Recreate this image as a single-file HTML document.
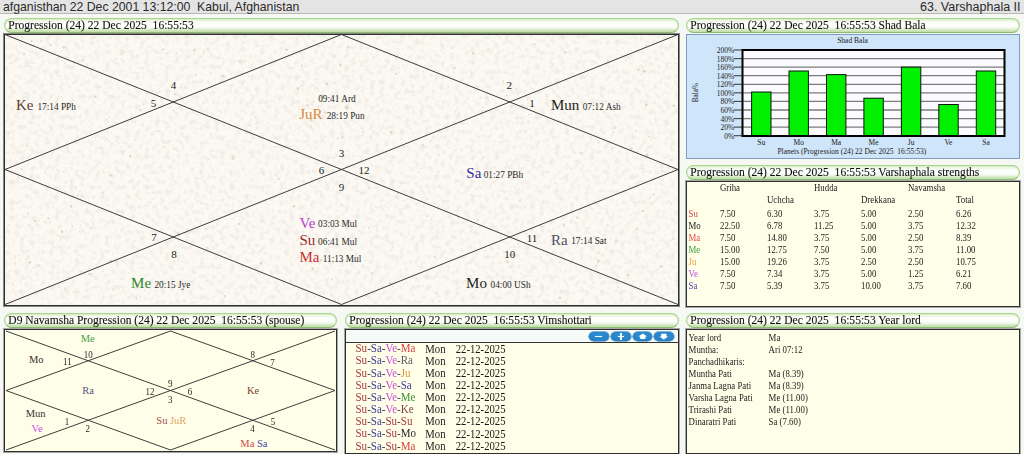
<!DOCTYPE html>
<html><head><meta charset="utf-8">
<style>
*{margin:0;padding:0;box-sizing:border-box}
html,body{width:1024px;height:454px;overflow:hidden;background:#f6f8f3;position:relative;font-family:"Liberation Serif",serif;color:#222}
.a{position:absolute;white-space:pre;line-height:1}
#hdr{position:absolute;left:0;top:0;width:1024px;height:14px;background:#e4e4e4;border-bottom:1px solid #b8b8b8}
.tb{position:absolute;height:15px;border:1px solid #a8d68c;border-bottom-color:#8cba72;border-radius:8px;background:linear-gradient(#e2f1d4 0,#fafdf7 28%,#fff 50%,#f2f9ec 70%,#d2e8bf 86%,#b2d49a 100%);box-shadow:inset 0 0 1px 0.5px #cfe9b8}
.tb span{position:absolute;left:3.3px;top:0px;font-size:11.55px;color:#111;white-space:pre;line-height:13px;-webkit-text-stroke:0.1px #111;transform:scaleY(1.12);transform-origin:0 10px}
.bx{position:absolute;border:1px solid #2e2e2e;box-shadow:0 0 0 1px #a8a8a8}
.btn{position:absolute;top:331.8px;width:19.5px;height:9.2px;border-radius:4.6px;background:radial-gradient(ellipse at 50% 40%,#3092d8,#2179c0);box-shadow:0 0 0 0.5px #1b6aa8}
.btn i{position:absolute;background:#fff;display:block}
.yel{background:#fffee8}
svg{position:absolute;left:0;top:0}
</style></head><body>
<div id="hdr"></div>
<div class="tb" style="left:4px;top:18px;width:675px"><span>Progression (24) 22 Dec 2025  16:55:53</span></div>
<div class="tb" style="left:686px;top:18px;width:334px"><span>Progression (24) 22 Dec 2025  16:55:53 Shad Bala</span></div>
<div class="tb" style="left:686px;top:165px;width:334px"><span>Progression (24) 22 Dec 2025  16:55:53 Varshaphala strengths</span></div>
<div class="tb" style="left:4px;top:313px;width:333px"><span>D9 Navamsha Progression (24) 22 Dec 2025  16:55:53 (spouse)</span></div>
<div class="tb" style="left:345px;top:313px;width:334px"><span>Progression (24) 22 Dec 2025  16:55:53 Vimshottari</span></div>
<div class="tb" style="left:686px;top:313px;width:334px"><span>Progression (24) 22 Dec 2025  16:55:53 Year lord</span></div>

<div class="bx" style="left:4px;top:34px;width:675px;height:271.5px;background:#fcf9f3;box-shadow:0 0 0 1px #888"></div>
<div class="bx" style="left:686px;top:33.5px;width:334px;height:125px;background:#cfe5f9;border:1px solid #7f9dc2;box-shadow:none"></div>
<div class="bx yel" style="left:686px;top:180.5px;width:334px;height:126px"></div>
<div class="bx yel" style="left:4px;top:329.3px;width:333px;height:122.5px"></div>
<div class="bx yel" style="left:345px;top:329.3px;width:334px;height:125px"></div>
<div style="position:absolute;left:346px;top:330px;width:332px;height:12px;background:#f6fbf8"></div>
<div style="position:absolute;left:346px;top:342px;width:332px;height:1px;background:#333"></div>
<div class="btn" style="left:589px"><i style="left:6px;top:3.8px;width:7px;height:1.6px"></i></div>
<div class="btn" style="left:611px"><i style="left:6.5px;top:3.8px;width:6.5px;height:1.6px"></i><i style="left:9px;top:1.3px;width:1.6px;height:6.5px"></i></div>
<div class="btn" style="left:632.8px"><svg width="19.5" height="9.2" style="position:absolute;left:0;top:0"><polygon points="5.5,4.6 9.8,1.4 14.1,4.6 12.4,4.6 12.4,7 7.2,7 7.2,4.6" fill="#fff"/></svg></div>
<div class="btn" style="left:654.3px"><svg width="19.5" height="9.2" style="position:absolute;left:0;top:0"><polygon points="7.2,1.8 12.4,1.8 12.4,4.4 14.3,4.4 9.8,7.6 5.3,4.4 7.2,4.4" fill="#fff"/></svg></div>
<div class="bx yel" style="left:686px;top:329.3px;width:334px;height:125px"></div>

<svg width="1024" height="454">
<filter id="pn" x="0" y="0" width="100%" height="100%"><feTurbulence type="fractalNoise" baseFrequency="0.2" numOctaves="2" seed="3"/><feColorMatrix values="0 0 0 0 0.45  0 0 0 0 0.38  0 0 0 0 0.32  0 0 0 -2.2 1.2"/></filter><rect x="5" y="35" width="673" height="270" filter="url(#pn)" opacity="0.22"/>
<g opacity="0.75"><circle cx="223.6" cy="76.3" r="1.3" fill="#d9d0c6"/><circle cx="55.5" cy="179.1" r="0.7" fill="#cfc6bc"/><circle cx="45.8" cy="171.5" r="0.5" fill="#d9d0c6"/><circle cx="297.1" cy="54.7" r="0.5" fill="#cfc6bc"/><circle cx="291.0" cy="256.8" r="0.5" fill="#e2d6d0"/><circle cx="428.9" cy="191.7" r="0.5" fill="#cfc6bc"/><circle cx="398.7" cy="49.2" r="0.6" fill="#d9d0c6"/><circle cx="379.4" cy="71.6" r="0.8" fill="#e2d6d0"/><circle cx="368.7" cy="188.4" r="1.0" fill="#e2d6d0"/><circle cx="75.9" cy="188.5" r="0.6" fill="#d4cdc4"/><circle cx="72.2" cy="226.1" r="1.0" fill="#d9d0c6"/><circle cx="421.1" cy="168.5" r="1.0" fill="#e6dcd2"/><circle cx="527.0" cy="160.3" r="0.8" fill="#d4cdc4"/><circle cx="207.5" cy="248.1" r="1.3" fill="#e2d6d0"/><circle cx="61.8" cy="116.2" r="0.8" fill="#d4cdc4"/><circle cx="495.0" cy="112.9" r="0.5" fill="#d9d0c6"/><circle cx="349.5" cy="80.0" r="0.7" fill="#e2d6d0"/><circle cx="631.4" cy="148.6" r="1.3" fill="#d9d0c6"/><circle cx="518.5" cy="189.0" r="0.7" fill="#d4cdc4"/><circle cx="472.2" cy="194.7" r="1.0" fill="#e6dcd2"/><circle cx="53.0" cy="61.0" r="0.7" fill="#e6dcd2"/><circle cx="473.3" cy="53.4" r="1.3" fill="#d4cdc4"/><circle cx="439.9" cy="301.2" r="0.8" fill="#d4cdc4"/><circle cx="486.4" cy="272.8" r="0.7" fill="#d9d0c6"/><circle cx="636.3" cy="130.9" r="1.0" fill="#d9d0c6"/><circle cx="337.3" cy="94.3" r="0.7" fill="#e2d6d0"/><circle cx="501.0" cy="142.2" r="0.8" fill="#d9d0c6"/><circle cx="118.3" cy="143.2" r="0.7" fill="#e2d6d0"/><circle cx="555.1" cy="266.7" r="0.7" fill="#e6dcd2"/><circle cx="666.9" cy="218.3" r="0.8" fill="#e2d6d0"/><circle cx="108.0" cy="83.1" r="0.6" fill="#e2d6d0"/><circle cx="15.1" cy="257.9" r="0.6" fill="#d4cdc4"/><circle cx="195.6" cy="74.9" r="1.0" fill="#d4cdc4"/><circle cx="415.0" cy="121.1" r="0.6" fill="#cfc6bc"/><circle cx="642.7" cy="210.9" r="1.3" fill="#d9d0c6"/><circle cx="312.5" cy="268.6" r="1.3" fill="#cfc6bc"/><circle cx="269.5" cy="142.5" r="0.5" fill="#e6dcd2"/><circle cx="431.3" cy="52.6" r="0.5" fill="#e2d6d0"/><circle cx="301.8" cy="65.4" r="1.0" fill="#d9d0c6"/><circle cx="75.5" cy="187.3" r="1.0" fill="#d9d0c6"/><circle cx="641.8" cy="199.9" r="0.5" fill="#e2d6d0"/><circle cx="417.8" cy="75.7" r="0.7" fill="#d4cdc4"/><circle cx="409.9" cy="162.6" r="0.5" fill="#e6dcd2"/><circle cx="671.4" cy="160.4" r="0.8" fill="#d4cdc4"/><circle cx="64.5" cy="63.3" r="0.7" fill="#d4cdc4"/><circle cx="327.2" cy="220.8" r="1.0" fill="#d9d0c6"/><circle cx="144.3" cy="290.2" r="0.7" fill="#e2d6d0"/><circle cx="468.7" cy="280.1" r="1.0" fill="#d4cdc4"/><circle cx="661.6" cy="266.5" r="1.3" fill="#d4cdc4"/><circle cx="353.8" cy="278.5" r="0.7" fill="#e2d6d0"/><circle cx="363.3" cy="244.0" r="0.7" fill="#e2d6d0"/><circle cx="417.2" cy="246.5" r="0.6" fill="#e2d6d0"/><circle cx="554.5" cy="233.5" r="0.6" fill="#e2d6d0"/><circle cx="353.3" cy="130.9" r="0.5" fill="#d9d0c6"/><circle cx="535.6" cy="162.1" r="0.6" fill="#cfc6bc"/><circle cx="646.9" cy="155.4" r="1.3" fill="#d4cdc4"/><circle cx="645.9" cy="133.4" r="0.6" fill="#d9d0c6"/><circle cx="158.8" cy="88.5" r="0.6" fill="#e6dcd2"/><circle cx="424.5" cy="276.4" r="0.5" fill="#e6dcd2"/><circle cx="615.3" cy="127.8" r="1.3" fill="#d9d0c6"/><circle cx="565.4" cy="68.0" r="0.8" fill="#e2d6d0"/><circle cx="326.8" cy="83.7" r="1.3" fill="#d4cdc4"/><circle cx="65.0" cy="288.6" r="1.3" fill="#e6dcd2"/><circle cx="316.9" cy="234.5" r="0.5" fill="#e2d6d0"/><circle cx="120.7" cy="69.9" r="0.6" fill="#cfc6bc"/><circle cx="612.3" cy="251.3" r="0.6" fill="#cfc6bc"/><circle cx="559.9" cy="297.7" r="1.3" fill="#d4cdc4"/><circle cx="111.3" cy="182.4" r="0.5" fill="#d9d0c6"/><circle cx="541.8" cy="229.9" r="0.5" fill="#cfc6bc"/><circle cx="508.4" cy="73.2" r="0.6" fill="#e2d6d0"/><circle cx="25.7" cy="92.8" r="1.0" fill="#e2d6d0"/><circle cx="517.9" cy="123.0" r="1.0" fill="#e6dcd2"/><circle cx="565.1" cy="52.3" r="1.3" fill="#d4cdc4"/><circle cx="607.6" cy="212.9" r="1.0" fill="#e6dcd2"/><circle cx="560.4" cy="270.5" r="0.6" fill="#cfc6bc"/><circle cx="108.6" cy="172.3" r="0.8" fill="#e2d6d0"/><circle cx="414.1" cy="243.2" r="0.6" fill="#e2d6d0"/><circle cx="101.7" cy="201.3" r="0.5" fill="#cfc6bc"/><circle cx="48.3" cy="218.2" r="1.0" fill="#cfc6bc"/><circle cx="329.8" cy="243.3" r="1.0" fill="#d9d0c6"/><circle cx="173.2" cy="109.9" r="0.5" fill="#cfc6bc"/><circle cx="309.5" cy="43.4" r="0.5" fill="#e6dcd2"/><circle cx="224.8" cy="295.9" r="1.0" fill="#cfc6bc"/><circle cx="140.4" cy="110.0" r="1.0" fill="#cfc6bc"/><circle cx="547.1" cy="171.6" r="0.6" fill="#cfc6bc"/><circle cx="593.4" cy="287.6" r="0.7" fill="#cfc6bc"/><circle cx="604.3" cy="90.1" r="0.8" fill="#e2d6d0"/><circle cx="285.7" cy="140.8" r="0.7" fill="#d9d0c6"/><circle cx="456.0" cy="150.4" r="0.6" fill="#d4cdc4"/><circle cx="531.5" cy="275.5" r="0.6" fill="#d4cdc4"/><circle cx="102.7" cy="271.7" r="0.8" fill="#e2d6d0"/><circle cx="506.5" cy="61.1" r="0.8" fill="#e2d6d0"/><circle cx="669.2" cy="258.3" r="0.6" fill="#e6dcd2"/><circle cx="672.0" cy="143.8" r="0.8" fill="#e2d6d0"/><circle cx="245.6" cy="60.6" r="0.7" fill="#d9d0c6"/><circle cx="233.1" cy="158.5" r="1.3" fill="#d9d0c6"/><circle cx="264.1" cy="174.2" r="0.7" fill="#cfc6bc"/><circle cx="649.8" cy="66.1" r="0.6" fill="#d9d0c6"/><circle cx="63.2" cy="108.6" r="0.6" fill="#d4cdc4"/><circle cx="512.6" cy="254.9" r="1.3" fill="#d4cdc4"/><circle cx="278.6" cy="179.3" r="1.0" fill="#cfc6bc"/><circle cx="337.9" cy="123.3" r="0.7" fill="#d9d0c6"/><circle cx="541.9" cy="85.0" r="0.5" fill="#d4cdc4"/><circle cx="634.8" cy="205.4" r="0.7" fill="#d9d0c6"/><circle cx="413.9" cy="95.4" r="0.7" fill="#d9d0c6"/><circle cx="310.6" cy="126.6" r="1.0" fill="#e6dcd2"/><circle cx="626.9" cy="107.5" r="0.6" fill="#d9d0c6"/><circle cx="359.5" cy="99.7" r="0.5" fill="#e2d6d0"/><circle cx="182.2" cy="84.4" r="0.7" fill="#d4cdc4"/><circle cx="362.3" cy="91.0" r="0.8" fill="#cfc6bc"/><circle cx="456.7" cy="108.2" r="0.5" fill="#d4cdc4"/><circle cx="31.7" cy="40.9" r="1.0" fill="#cfc6bc"/><circle cx="661.3" cy="173.3" r="0.6" fill="#e6dcd2"/><circle cx="78.1" cy="254.7" r="0.8" fill="#e6dcd2"/><circle cx="372.2" cy="273.3" r="1.0" fill="#d4cdc4"/><circle cx="467.1" cy="298.3" r="0.7" fill="#e2d6d0"/><circle cx="563.8" cy="224.7" r="1.3" fill="#e2d6d0"/><circle cx="277.7" cy="128.8" r="0.5" fill="#e2d6d0"/><circle cx="16.5" cy="203.0" r="0.7" fill="#e6dcd2"/><circle cx="116.2" cy="58.6" r="0.8" fill="#cfc6bc"/><circle cx="455.6" cy="111.3" r="0.6" fill="#d4cdc4"/><circle cx="37.3" cy="85.5" r="0.7" fill="#e6dcd2"/><circle cx="9.4" cy="133.2" r="0.7" fill="#cfc6bc"/><circle cx="223.4" cy="45.2" r="0.7" fill="#e2d6d0"/><circle cx="245.6" cy="36.3" r="0.8" fill="#d9d0c6"/><circle cx="324.5" cy="170.2" r="0.6" fill="#e2d6d0"/><circle cx="344.7" cy="37.3" r="0.7" fill="#d9d0c6"/><circle cx="103.2" cy="192.7" r="0.8" fill="#d9d0c6"/><circle cx="207.5" cy="204.1" r="0.5" fill="#cfc6bc"/><circle cx="647.7" cy="263.8" r="0.6" fill="#cfc6bc"/><circle cx="267.6" cy="123.1" r="0.8" fill="#e2d6d0"/><circle cx="197.1" cy="201.2" r="0.6" fill="#d9d0c6"/><circle cx="558.8" cy="226.9" r="1.0" fill="#e6dcd2"/><circle cx="497.9" cy="252.9" r="0.6" fill="#cfc6bc"/><circle cx="510.7" cy="187.8" r="0.5" fill="#cfc6bc"/><circle cx="540.8" cy="225.9" r="1.3" fill="#e2d6d0"/><circle cx="63.9" cy="47.2" r="1.3" fill="#d4cdc4"/><circle cx="648.9" cy="136.6" r="0.8" fill="#cfc6bc"/><circle cx="41.0" cy="41.0" r="1.0" fill="#e2d6d0"/><circle cx="334.3" cy="36.9" r="0.5" fill="#cfc6bc"/><circle cx="607.7" cy="60.5" r="1.0" fill="#d9d0c6"/><circle cx="505.9" cy="162.5" r="0.5" fill="#d4cdc4"/><circle cx="164.1" cy="238.0" r="0.6" fill="#e6dcd2"/><circle cx="337.5" cy="138.1" r="0.8" fill="#d4cdc4"/><circle cx="520.1" cy="200.7" r="1.3" fill="#e2d6d0"/><circle cx="58.8" cy="75.4" r="0.7" fill="#d4cdc4"/><circle cx="422.5" cy="71.6" r="0.8" fill="#d9d0c6"/><circle cx="332.0" cy="295.7" r="0.5" fill="#e2d6d0"/><circle cx="459.0" cy="113.7" r="1.0" fill="#d4cdc4"/><circle cx="317.9" cy="160.5" r="0.5" fill="#cfc6bc"/><circle cx="140.3" cy="297.2" r="0.8" fill="#d9d0c6"/><circle cx="200.7" cy="56.4" r="1.0" fill="#e6dcd2"/><circle cx="672.0" cy="139.3" r="0.6" fill="#d9d0c6"/><circle cx="396.0" cy="73.8" r="1.0" fill="#d4cdc4"/><circle cx="644.4" cy="71.4" r="1.3" fill="#cfc6bc"/><circle cx="194.0" cy="66.1" r="0.7" fill="#e2d6d0"/><circle cx="340.1" cy="269.9" r="0.8" fill="#d9d0c6"/><circle cx="113.4" cy="289.6" r="1.3" fill="#e6dcd2"/><circle cx="278.2" cy="230.2" r="0.8" fill="#d4cdc4"/><circle cx="258.6" cy="68.3" r="0.7" fill="#d9d0c6"/><circle cx="224.1" cy="126.3" r="0.8" fill="#d9d0c6"/><circle cx="635.8" cy="88.3" r="0.5" fill="#d4cdc4"/><circle cx="176.4" cy="53.3" r="0.8" fill="#cfc6bc"/><circle cx="58.1" cy="283.1" r="0.7" fill="#d9d0c6"/><circle cx="194.7" cy="49.8" r="1.3" fill="#d4cdc4"/><circle cx="431.8" cy="75.8" r="0.7" fill="#e6dcd2"/><circle cx="348.8" cy="86.7" r="0.7" fill="#e6dcd2"/><circle cx="598.6" cy="252.8" r="1.3" fill="#e6dcd2"/><circle cx="618.1" cy="287.2" r="1.0" fill="#e2d6d0"/><circle cx="488.4" cy="49.2" r="1.3" fill="#e6dcd2"/><circle cx="308.6" cy="237.0" r="1.3" fill="#d4cdc4"/><circle cx="331.8" cy="279.5" r="1.0" fill="#e2d6d0"/><circle cx="121.2" cy="146.8" r="0.7" fill="#d4cdc4"/><circle cx="178.1" cy="233.2" r="1.3" fill="#d4cdc4"/><circle cx="278.8" cy="99.7" r="0.8" fill="#cfc6bc"/><circle cx="454.5" cy="68.0" r="1.3" fill="#e2d6d0"/><circle cx="57.3" cy="169.7" r="0.8" fill="#cfc6bc"/><circle cx="154.2" cy="278.0" r="0.8" fill="#e6dcd2"/><circle cx="100.4" cy="87.4" r="0.5" fill="#e2d6d0"/><circle cx="235.8" cy="60.3" r="0.6" fill="#d4cdc4"/><circle cx="179.8" cy="188.1" r="0.5" fill="#e6dcd2"/><circle cx="263.1" cy="235.1" r="0.6" fill="#e6dcd2"/><circle cx="187.8" cy="236.8" r="0.8" fill="#d4cdc4"/><circle cx="391.2" cy="132.2" r="1.3" fill="#cfc6bc"/><circle cx="361.1" cy="247.0" r="0.6" fill="#d9d0c6"/><circle cx="188.3" cy="102.3" r="0.8" fill="#e6dcd2"/><circle cx="295.9" cy="119.3" r="0.5" fill="#e2d6d0"/><circle cx="28.6" cy="225.4" r="0.8" fill="#cfc6bc"/><circle cx="334.7" cy="55.5" r="1.0" fill="#e6dcd2"/><circle cx="657.4" cy="102.3" r="0.5" fill="#e2d6d0"/><circle cx="110.3" cy="175.5" r="1.3" fill="#d9d0c6"/><circle cx="636.9" cy="228.7" r="1.3" fill="#e6dcd2"/><circle cx="63.9" cy="243.4" r="0.5" fill="#e2d6d0"/><circle cx="162.6" cy="281.6" r="1.3" fill="#d4cdc4"/><circle cx="650.9" cy="203.3" r="1.0" fill="#e6dcd2"/><circle cx="474.4" cy="65.9" r="0.5" fill="#d4cdc4"/><circle cx="357.8" cy="191.6" r="0.8" fill="#d4cdc4"/><circle cx="156.6" cy="196.5" r="0.5" fill="#cfc6bc"/><circle cx="208.7" cy="159.0" r="0.7" fill="#e2d6d0"/><circle cx="325.0" cy="98.7" r="0.6" fill="#d9d0c6"/><circle cx="649.7" cy="224.1" r="0.7" fill="#d9d0c6"/><circle cx="21.6" cy="169.0" r="1.3" fill="#e6dcd2"/><circle cx="61.3" cy="96.8" r="0.8" fill="#d4cdc4"/><circle cx="158.7" cy="45.1" r="0.7" fill="#e6dcd2"/><circle cx="249.4" cy="141.8" r="0.5" fill="#d4cdc4"/><circle cx="501.5" cy="170.8" r="0.6" fill="#e6dcd2"/><circle cx="655.8" cy="119.2" r="0.6" fill="#e2d6d0"/><circle cx="318.2" cy="106.8" r="0.7" fill="#d9d0c6"/><circle cx="643.8" cy="168.4" r="0.6" fill="#e2d6d0"/><circle cx="331.5" cy="279.1" r="0.5" fill="#cfc6bc"/><circle cx="104.9" cy="141.1" r="0.6" fill="#d9d0c6"/><circle cx="658.7" cy="73.9" r="0.5" fill="#d9d0c6"/><circle cx="130.2" cy="156.1" r="1.3" fill="#d4cdc4"/><circle cx="497.2" cy="302.3" r="0.6" fill="#d4cdc4"/><circle cx="134.6" cy="210.2" r="1.0" fill="#e6dcd2"/><circle cx="28.3" cy="213.4" r="0.8" fill="#d4cdc4"/><circle cx="666.0" cy="154.1" r="0.5" fill="#d9d0c6"/><circle cx="59.3" cy="57.6" r="0.8" fill="#d9d0c6"/><circle cx="382.4" cy="238.6" r="0.8" fill="#d4cdc4"/><circle cx="521.3" cy="118.4" r="0.8" fill="#d9d0c6"/><circle cx="40.0" cy="162.4" r="0.7" fill="#cfc6bc"/><circle cx="622.1" cy="87.5" r="0.7" fill="#e6dcd2"/><circle cx="27.3" cy="145.7" r="1.3" fill="#e6dcd2"/><circle cx="34.2" cy="45.3" r="0.5" fill="#d9d0c6"/><circle cx="178.9" cy="235.5" r="1.0" fill="#d4cdc4"/><circle cx="249.8" cy="125.4" r="1.0" fill="#d9d0c6"/><circle cx="182.4" cy="227.3" r="0.7" fill="#d4cdc4"/><circle cx="206.0" cy="228.7" r="1.0" fill="#d9d0c6"/><circle cx="23.2" cy="98.4" r="0.8" fill="#e6dcd2"/><circle cx="645.2" cy="139.2" r="0.7" fill="#e6dcd2"/><circle cx="552.1" cy="71.4" r="0.8" fill="#e2d6d0"/><circle cx="12.8" cy="284.6" r="0.7" fill="#e2d6d0"/><circle cx="413.3" cy="123.5" r="0.7" fill="#e6dcd2"/><circle cx="249.1" cy="244.9" r="0.5" fill="#cfc6bc"/><circle cx="139.0" cy="237.0" r="0.6" fill="#e6dcd2"/><circle cx="50.3" cy="45.0" r="1.0" fill="#cfc6bc"/><circle cx="224.9" cy="297.7" r="0.5" fill="#d9d0c6"/><circle cx="184.2" cy="58.5" r="0.5" fill="#e6dcd2"/><circle cx="340.5" cy="225.5" r="0.8" fill="#e2d6d0"/><circle cx="163.7" cy="147.3" r="1.0" fill="#e2d6d0"/><circle cx="507.4" cy="262.1" r="1.3" fill="#d9d0c6"/><circle cx="528.7" cy="114.5" r="0.7" fill="#cfc6bc"/><circle cx="186.1" cy="103.8" r="0.7" fill="#e2d6d0"/><circle cx="301.0" cy="85.6" r="0.6" fill="#e2d6d0"/><circle cx="195.2" cy="278.3" r="0.6" fill="#d4cdc4"/><circle cx="50.4" cy="103.2" r="0.6" fill="#cfc6bc"/><circle cx="359.1" cy="209.5" r="0.5" fill="#e6dcd2"/><circle cx="669.9" cy="63.3" r="0.8" fill="#e2d6d0"/><circle cx="569.3" cy="280.1" r="0.5" fill="#d4cdc4"/><circle cx="162.8" cy="49.5" r="1.0" fill="#cfc6bc"/><circle cx="136.9" cy="56.1" r="1.0" fill="#e2d6d0"/><circle cx="307.5" cy="105.4" r="1.3" fill="#d9d0c6"/><circle cx="77.8" cy="195.2" r="1.0" fill="#d4cdc4"/><circle cx="152.6" cy="134.4" r="0.6" fill="#d9d0c6"/><circle cx="143.5" cy="104.1" r="1.0" fill="#e2d6d0"/><circle cx="552.1" cy="254.6" r="0.8" fill="#d4cdc4"/><circle cx="130.9" cy="119.4" r="0.6" fill="#d9d0c6"/><circle cx="539.0" cy="182.3" r="0.5" fill="#e6dcd2"/><circle cx="74.8" cy="141.5" r="1.0" fill="#e2d6d0"/><circle cx="434.6" cy="60.3" r="0.6" fill="#e6dcd2"/><circle cx="472.2" cy="145.4" r="0.7" fill="#d4cdc4"/><circle cx="286.5" cy="49.7" r="1.3" fill="#cfc6bc"/><circle cx="598.2" cy="146.6" r="0.5" fill="#d4cdc4"/><circle cx="438.2" cy="140.3" r="0.8" fill="#e2d6d0"/><circle cx="637.2" cy="151.9" r="0.6" fill="#e6dcd2"/><circle cx="83.0" cy="60.2" r="1.0" fill="#d4cdc4"/><circle cx="315.3" cy="79.4" r="0.5" fill="#d9d0c6"/><circle cx="376.0" cy="207.1" r="0.8" fill="#d9d0c6"/><circle cx="390.2" cy="283.6" r="1.3" fill="#cfc6bc"/><circle cx="121.9" cy="128.9" r="0.6" fill="#cfc6bc"/><circle cx="121.9" cy="53.9" r="0.8" fill="#e6dcd2"/><circle cx="511.1" cy="247.5" r="0.6" fill="#d4cdc4"/><circle cx="91.7" cy="287.8" r="0.8" fill="#d4cdc4"/><circle cx="42.7" cy="283.3" r="0.8" fill="#d9d0c6"/><circle cx="611.9" cy="201.6" r="0.6" fill="#e2d6d0"/><circle cx="422.5" cy="200.1" r="0.6" fill="#e6dcd2"/><circle cx="129.4" cy="94.2" r="0.8" fill="#cfc6bc"/><circle cx="111.7" cy="131.9" r="0.6" fill="#e2d6d0"/><circle cx="656.4" cy="253.8" r="0.6" fill="#d9d0c6"/><circle cx="598.3" cy="260.9" r="1.3" fill="#d9d0c6"/><circle cx="453.8" cy="122.6" r="0.8" fill="#cfc6bc"/><circle cx="311.9" cy="262.7" r="0.7" fill="#e6dcd2"/><circle cx="213.2" cy="102.6" r="0.8" fill="#d4cdc4"/><circle cx="305.9" cy="153.0" r="0.5" fill="#d9d0c6"/><circle cx="421.0" cy="166.7" r="0.6" fill="#e6dcd2"/><circle cx="517.8" cy="244.3" r="0.8" fill="#e2d6d0"/><circle cx="549.2" cy="142.9" r="0.5" fill="#e2d6d0"/><circle cx="246.9" cy="133.5" r="0.8" fill="#cfc6bc"/><circle cx="348.3" cy="46.9" r="1.3" fill="#e2d6d0"/><circle cx="62.0" cy="231.8" r="1.3" fill="#cfc6bc"/><circle cx="60.5" cy="236.8" r="0.8" fill="#e2d6d0"/><circle cx="24.3" cy="53.7" r="1.0" fill="#d9d0c6"/><circle cx="136.6" cy="298.1" r="0.8" fill="#d4cdc4"/><circle cx="647.0" cy="280.6" r="0.6" fill="#e2d6d0"/><circle cx="50.8" cy="129.7" r="0.7" fill="#e2d6d0"/><circle cx="223.6" cy="199.8" r="0.8" fill="#e2d6d0"/><circle cx="177.0" cy="293.5" r="0.8" fill="#e2d6d0"/><circle cx="403.0" cy="200.4" r="0.6" fill="#d4cdc4"/><circle cx="256.0" cy="89.1" r="0.8" fill="#e2d6d0"/><circle cx="432.9" cy="110.3" r="0.7" fill="#e6dcd2"/><circle cx="119.9" cy="245.6" r="0.5" fill="#cfc6bc"/><circle cx="39.5" cy="265.2" r="0.8" fill="#cfc6bc"/><circle cx="355.9" cy="219.9" r="0.5" fill="#d4cdc4"/><circle cx="671.3" cy="204.2" r="0.8" fill="#d4cdc4"/><circle cx="184.1" cy="300.5" r="1.0" fill="#e2d6d0"/><circle cx="248.0" cy="240.2" r="0.8" fill="#e2d6d0"/><circle cx="125.2" cy="234.5" r="0.5" fill="#d4cdc4"/><circle cx="555.5" cy="103.7" r="1.3" fill="#cfc6bc"/><circle cx="628.1" cy="275.2" r="1.3" fill="#d9d0c6"/><circle cx="506.8" cy="95.2" r="0.7" fill="#cfc6bc"/><circle cx="425.5" cy="147.5" r="0.7" fill="#d9d0c6"/><circle cx="95.3" cy="96.7" r="1.3" fill="#d9d0c6"/><circle cx="21.9" cy="36.7" r="0.7" fill="#d4cdc4"/><circle cx="78.2" cy="131.4" r="0.6" fill="#e6dcd2"/><circle cx="397.4" cy="193.3" r="0.6" fill="#d4cdc4"/><circle cx="424.4" cy="162.8" r="0.6" fill="#d9d0c6"/><circle cx="633.6" cy="101.0" r="0.6" fill="#e6dcd2"/><circle cx="71.1" cy="206.4" r="1.3" fill="#d4cdc4"/><circle cx="275.9" cy="106.6" r="0.5" fill="#d9d0c6"/><circle cx="438.5" cy="186.1" r="0.7" fill="#cfc6bc"/><circle cx="438.9" cy="154.5" r="1.0" fill="#e6dcd2"/><circle cx="173.2" cy="277.2" r="0.5" fill="#d9d0c6"/><circle cx="362.6" cy="144.4" r="0.6" fill="#e2d6d0"/><circle cx="46.1" cy="244.0" r="0.5" fill="#cfc6bc"/><circle cx="375.6" cy="287.2" r="0.6" fill="#e6dcd2"/><circle cx="140.5" cy="198.4" r="1.0" fill="#e6dcd2"/><circle cx="551.2" cy="82.6" r="0.7" fill="#d9d0c6"/><circle cx="207.9" cy="48.9" r="1.3" fill="#e6dcd2"/><circle cx="485.6" cy="37.7" r="0.8" fill="#e6dcd2"/><circle cx="60.8" cy="211.0" r="0.6" fill="#e2d6d0"/><circle cx="673.7" cy="105.8" r="1.3" fill="#d9d0c6"/><circle cx="89.5" cy="274.0" r="1.3" fill="#d4cdc4"/><circle cx="483.1" cy="107.0" r="1.0" fill="#e6dcd2"/><circle cx="465.8" cy="280.9" r="0.7" fill="#d4cdc4"/><circle cx="436.5" cy="293.7" r="0.6" fill="#d9d0c6"/><circle cx="595.8" cy="40.1" r="0.7" fill="#e2d6d0"/><circle cx="570.1" cy="90.1" r="0.6" fill="#d4cdc4"/><circle cx="135.4" cy="139.8" r="1.0" fill="#e2d6d0"/><circle cx="260.9" cy="263.5" r="1.3" fill="#cfc6bc"/><circle cx="321.1" cy="260.2" r="1.3" fill="#d9d0c6"/><circle cx="580.7" cy="152.7" r="1.3" fill="#e2d6d0"/><circle cx="388.6" cy="118.2" r="0.6" fill="#e6dcd2"/><circle cx="423.5" cy="56.8" r="0.6" fill="#e2d6d0"/><circle cx="29.0" cy="65.9" r="1.0" fill="#e2d6d0"/><circle cx="237.7" cy="73.9" r="0.5" fill="#d9d0c6"/><circle cx="34.9" cy="220.9" r="1.3" fill="#d9d0c6"/><circle cx="473.3" cy="232.7" r="0.5" fill="#cfc6bc"/><circle cx="516.6" cy="89.2" r="1.0" fill="#d9d0c6"/><circle cx="595.5" cy="237.8" r="1.3" fill="#e6dcd2"/><circle cx="78.7" cy="90.9" r="0.5" fill="#d9d0c6"/><circle cx="30.0" cy="262.3" r="1.3" fill="#d9d0c6"/><circle cx="559.0" cy="204.6" r="0.7" fill="#e6dcd2"/><circle cx="73.8" cy="62.1" r="1.3" fill="#e2d6d0"/><circle cx="204.0" cy="125.8" r="0.7" fill="#d9d0c6"/><circle cx="241.8" cy="284.3" r="0.5" fill="#d4cdc4"/><circle cx="616.0" cy="241.4" r="1.0" fill="#cfc6bc"/><circle cx="325.5" cy="112.8" r="1.3" fill="#d9d0c6"/><circle cx="534.9" cy="44.3" r="1.0" fill="#d9d0c6"/><circle cx="239.0" cy="224.1" r="1.0" fill="#cfc6bc"/><circle cx="151.9" cy="266.2" r="0.5" fill="#cfc6bc"/><circle cx="555.5" cy="81.5" r="0.5" fill="#cfc6bc"/><circle cx="142.2" cy="239.5" r="0.5" fill="#d9d0c6"/><circle cx="239.7" cy="61.5" r="1.3" fill="#e2d6d0"/><circle cx="654.0" cy="194.2" r="1.0" fill="#d4cdc4"/><circle cx="393.7" cy="78.4" r="0.6" fill="#e2d6d0"/><circle cx="340.4" cy="65.3" r="1.3" fill="#d9d0c6"/><circle cx="335.0" cy="300.6" r="1.0" fill="#d9d0c6"/><circle cx="427.1" cy="130.9" r="0.8" fill="#e6dcd2"/><circle cx="603.6" cy="235.0" r="0.8" fill="#d9d0c6"/><circle cx="255.8" cy="116.9" r="0.8" fill="#cfc6bc"/><circle cx="342.3" cy="137.3" r="1.3" fill="#e2d6d0"/><circle cx="638.5" cy="69.9" r="1.0" fill="#cfc6bc"/><circle cx="439.4" cy="129.0" r="0.7" fill="#cfc6bc"/><circle cx="110.9" cy="261.1" r="1.3" fill="#cfc6bc"/><circle cx="503.4" cy="81.3" r="0.8" fill="#d4cdc4"/><circle cx="394.5" cy="69.7" r="0.8" fill="#e2d6d0"/><circle cx="346.7" cy="107.4" r="1.3" fill="#cfc6bc"/><circle cx="110.4" cy="77.6" r="0.6" fill="#d4cdc4"/><circle cx="410.3" cy="129.1" r="0.6" fill="#d4cdc4"/><circle cx="646.4" cy="105.1" r="1.3" fill="#d9d0c6"/><circle cx="117.1" cy="211.7" r="0.6" fill="#e6dcd2"/><circle cx="108.0" cy="75.6" r="0.7" fill="#d4cdc4"/><circle cx="298.0" cy="88.4" r="1.3" fill="#d9d0c6"/><circle cx="194.9" cy="272.4" r="0.8" fill="#d9d0c6"/><circle cx="15.4" cy="264.1" r="0.8" fill="#e2d6d0"/><circle cx="341.8" cy="204.8" r="0.8" fill="#d9d0c6"/><circle cx="101.9" cy="197.2" r="0.8" fill="#d9d0c6"/><circle cx="502.7" cy="278.4" r="0.8" fill="#cfc6bc"/><circle cx="400.0" cy="208.8" r="0.6" fill="#cfc6bc"/><circle cx="577.3" cy="217.5" r="1.3" fill="#d9d0c6"/><circle cx="310.7" cy="119.6" r="1.3" fill="#d9d0c6"/><circle cx="605.6" cy="100.7" r="0.8" fill="#e2d6d0"/><circle cx="174.3" cy="149.1" r="0.8" fill="#d9d0c6"/><circle cx="422.8" cy="145.3" r="1.3" fill="#e2d6d0"/><circle cx="605.4" cy="123.6" r="0.5" fill="#e6dcd2"/><circle cx="563.5" cy="278.5" r="0.5" fill="#d9d0c6"/><circle cx="175.1" cy="94.2" r="1.3" fill="#e2d6d0"/><circle cx="354.4" cy="63.0" r="1.0" fill="#e6dcd2"/><circle cx="369.0" cy="227.5" r="1.0" fill="#d9d0c6"/><circle cx="434.7" cy="257.3" r="1.0" fill="#d4cdc4"/><circle cx="281.5" cy="289.1" r="0.6" fill="#e2d6d0"/><circle cx="269.6" cy="239.6" r="0.5" fill="#cfc6bc"/><circle cx="244.8" cy="51.1" r="0.7" fill="#e6dcd2"/><circle cx="274.4" cy="39.6" r="0.8" fill="#e6dcd2"/><circle cx="427.5" cy="216.2" r="1.0" fill="#d4cdc4"/><circle cx="80.1" cy="117.0" r="0.8" fill="#cfc6bc"/><circle cx="656.9" cy="301.5" r="0.8" fill="#e6dcd2"/><circle cx="148.8" cy="70.5" r="0.5" fill="#e2d6d0"/><circle cx="320.9" cy="186.1" r="0.6" fill="#e2d6d0"/><circle cx="243.2" cy="206.6" r="0.8" fill="#e6dcd2"/><circle cx="673.4" cy="238.9" r="1.3" fill="#e2d6d0"/><circle cx="528.7" cy="161.3" r="0.6" fill="#d4cdc4"/><circle cx="478.1" cy="219.5" r="0.8" fill="#e2d6d0"/><circle cx="329.2" cy="251.1" r="0.7" fill="#d4cdc4"/><circle cx="170.9" cy="116.6" r="0.8" fill="#e6dcd2"/><circle cx="293.7" cy="206.2" r="1.3" fill="#d4cdc4"/><circle cx="109.2" cy="116.9" r="0.8" fill="#d9d0c6"/><circle cx="64.1" cy="186.7" r="0.7" fill="#e2d6d0"/><circle cx="362.0" cy="128.2" r="1.0" fill="#d9d0c6"/><circle cx="446.7" cy="92.0" r="0.5" fill="#d4cdc4"/></g>
<g stroke="#333" stroke-width="0.95" fill="none">
<line x1="5" y1="34.5" x2="678" y2="304.5"/><line x1="678" y1="34.5" x2="5" y2="304.5"/>
<polyline points="341.5,34.5 5,169.5 341.5,304.5 678,169.5 341.5,34.5"/>
<line x1="6" y1="331" x2="335" y2="450"/><line x1="335" y1="331" x2="6" y2="450"/>
<polyline points="170.5,331 6,390.5 170.5,450 335,390.5 170.5,331"/>
</g>
<rect x="742.5" y="50" width="262.0" height="86" fill="#fbfbff"/>
<line x1="742.5" y1="127.1" x2="1004.5" y2="127.1" stroke="#7c7c7c" stroke-width="1.3"/>
<line x1="742.5" y1="118.6" x2="1004.5" y2="118.6" stroke="#7c7c7c" stroke-width="1.3"/>
<line x1="742.5" y1="110.0" x2="1004.5" y2="110.0" stroke="#7c7c7c" stroke-width="1.3"/>
<line x1="742.5" y1="101.4" x2="1004.5" y2="101.4" stroke="#7c7c7c" stroke-width="1.3"/>
<line x1="742.5" y1="92.8" x2="1004.5" y2="92.8" stroke="#7c7c7c" stroke-width="1.3"/>
<line x1="742.5" y1="84.3" x2="1004.5" y2="84.3" stroke="#7c7c7c" stroke-width="1.3"/>
<line x1="742.5" y1="75.7" x2="1004.5" y2="75.7" stroke="#7c7c7c" stroke-width="1.3"/>
<line x1="742.5" y1="67.1" x2="1004.5" y2="67.1" stroke="#7c7c7c" stroke-width="1.3"/>
<line x1="742.5" y1="58.6" x2="1004.5" y2="58.6" stroke="#7c7c7c" stroke-width="1.3"/>
<line x1="733.5" y1="135.7" x2="742.5" y2="135.7" stroke="#444" stroke-width="1.1"/>
<line x1="733.5" y1="127.1" x2="742.5" y2="127.1" stroke="#444" stroke-width="1.1"/>
<line x1="733.5" y1="118.6" x2="742.5" y2="118.6" stroke="#444" stroke-width="1.1"/>
<line x1="733.5" y1="110.0" x2="742.5" y2="110.0" stroke="#444" stroke-width="1.1"/>
<line x1="733.5" y1="101.4" x2="742.5" y2="101.4" stroke="#444" stroke-width="1.1"/>
<line x1="733.5" y1="92.8" x2="742.5" y2="92.8" stroke="#444" stroke-width="1.1"/>
<line x1="733.5" y1="84.3" x2="742.5" y2="84.3" stroke="#444" stroke-width="1.1"/>
<line x1="733.5" y1="75.7" x2="742.5" y2="75.7" stroke="#444" stroke-width="1.1"/>
<line x1="733.5" y1="67.1" x2="742.5" y2="67.1" stroke="#444" stroke-width="1.1"/>
<line x1="733.5" y1="58.6" x2="742.5" y2="58.6" stroke="#444" stroke-width="1.1"/>
<line x1="733.5" y1="50.0" x2="742.5" y2="50.0" stroke="#444" stroke-width="1.1"/>
<rect x="751.6" y="92.0" width="19.4" height="43.7" fill="#00f000" stroke="#111" stroke-width="1"/>
<rect x="789.0" y="71.0" width="19.4" height="64.7" fill="#00f000" stroke="#111" stroke-width="1"/>
<rect x="826.5" y="74.6" width="19.4" height="61.1" fill="#00f000" stroke="#111" stroke-width="1"/>
<rect x="863.9" y="98.2" width="19.4" height="37.5" fill="#00f000" stroke="#111" stroke-width="1"/>
<rect x="901.4" y="67.1" width="19.4" height="68.6" fill="#00f000" stroke="#111" stroke-width="1"/>
<rect x="938.8" y="104.5" width="19.4" height="31.2" fill="#00f000" stroke="#111" stroke-width="1"/>
<rect x="976.3" y="71.0" width="19.4" height="64.7" fill="#00f000" stroke="#111" stroke-width="1"/>
<rect x="742.5" y="50" width="262.0" height="86" fill="none" stroke="#000" stroke-width="2"/>
</svg>
<span class="a" style="left:3.0px;top:1.4px;font-size:12.25px;color:#2a2a2a;font-family:'Liberation Sans',sans-serif;">afganisthan 22 Dec 2001 13:12:00  Kabul, Afghanistan</span>
<span class="a" style="left:920.0px;top:1.2px;font-size:12.5px;color:#2a2a2a;font-family:'Liberation Sans',sans-serif;">63. Varshaphala II</span>
<span class="a" style="left:15.9px;top:97.9px;font-size:15px;color:#604038;">Ke</span>
<span class="a" style="left:37.4px;top:102.7px;font-size:9.3px;color:#2a2a2a;">17:14 PPh</span>
<span class="a" style="left:299.2px;top:107.1px;font-size:15px;color:#d68a3a;">JuR</span>
<span class="a" style="left:326.7px;top:111.9px;font-size:9.3px;color:#2a2a2a;">28:19 Pun</span>
<span class="a" style="left:551.0px;top:98.1px;font-size:15px;color:#1e1e1e;">Mun</span>
<span class="a" style="left:582.7px;top:102.9px;font-size:9.3px;color:#2a2a2a;">07:12 Ash</span>
<span class="a" style="left:466.3px;top:165.9px;font-size:15px;color:#30309c;">Sa</span>
<span class="a" style="left:483.7px;top:170.7px;font-size:9.3px;color:#2a2a2a;">01:27 PBh</span>
<span class="a" style="left:299.5px;top:215.5px;font-size:15px;color:#b644d0;">Ve</span>
<span class="a" style="left:318.1px;top:220.3px;font-size:9.3px;color:#2a2a2a;">03:03 Mul</span>
<span class="a" style="left:299.5px;top:233.0px;font-size:15px;color:#962a2a;">Su</span>
<span class="a" style="left:318.1px;top:237.8px;font-size:9.3px;color:#2a2a2a;">06:41 Mul</span>
<span class="a" style="left:299.5px;top:249.9px;font-size:15px;color:#cc3030;">Ma</span>
<span class="a" style="left:322.7px;top:254.7px;font-size:9.3px;color:#2a2a2a;">11:13 Mul</span>
<span class="a" style="left:131.1px;top:275.7px;font-size:15px;color:#2f852f;">Me</span>
<span class="a" style="left:154.4px;top:280.5px;font-size:9.3px;color:#2a2a2a;">20:15 Jye</span>
<span class="a" style="left:551.1px;top:232.6px;font-size:15px;color:#505066;">Ra</span>
<span class="a" style="left:571.2px;top:237.4px;font-size:9.3px;color:#2a2a2a;">17:14 Sat</span>
<span class="a" style="left:466.1px;top:275.7px;font-size:15px;color:#1e1e1e;">Mo</span>
<span class="a" style="left:490.5px;top:280.5px;font-size:9.3px;color:#2a2a2a;">04:00 USh</span>
<span class="a" style="left:318.2px;top:94.7px;font-size:9.3px;color:#2a2a2a;">09:41 Ard</span>
<span class="a" style="left:170.7px;top:80.2px;font-size:11px;color:#222;">4</span>
<span class="a" style="left:150.7px;top:98.4px;font-size:11px;color:#222;">5</span>
<span class="a" style="left:338.7px;top:148.2px;font-size:11px;color:#222;">3</span>
<span class="a" style="left:318.7px;top:165.4px;font-size:11px;color:#222;">6</span>
<span class="a" style="left:358.5px;top:165.4px;font-size:11px;color:#222;">12</span>
<span class="a" style="left:338.7px;top:182.0px;font-size:11px;color:#222;">9</span>
<span class="a" style="left:506.5px;top:80.4px;font-size:11px;color:#222;">2</span>
<span class="a" style="left:529.2px;top:98.0px;font-size:11px;color:#222;">1</span>
<span class="a" style="left:151.3px;top:232.1px;font-size:11px;color:#222;">7</span>
<span class="a" style="left:171.3px;top:249.1px;font-size:11px;color:#222;">8</span>
<span class="a" style="left:526.7px;top:232.5px;font-size:11px;color:#222;">11</span>
<span class="a" style="left:504.3px;top:249.4px;font-size:11px;color:#222;">10</span>
<span class="a" style="left:80.7px;top:333.8px;font-size:10.5px;color:#4a9e4a;">Me</span>
<span class="a" style="left:29.0px;top:355.4px;font-size:10.5px;color:#333;">Mo</span>
<span class="a" style="left:82.2px;top:386.0px;font-size:10.5px;color:#55557a;">Ra</span>
<span class="a" style="left:25.7px;top:408.8px;font-size:10.5px;color:#333;">Mun</span>
<span class="a" style="left:31.5px;top:423.5px;font-size:10.5px;color:#d050e8;">Ve</span>
<span class="a" style="left:247.0px;top:385.7px;font-size:10.5px;color:#7a4030;">Ke</span>
<span class="a" style="left:156.3px;top:415.9px;font-size:10.5px;color:#333;"><span style="color:#a44c4c">Su</span> <span style="color:#dca868">JuR</span></span>
<span class="a" style="left:240.3px;top:439.0px;font-size:10.5px;color:#333;"><span style="color:#d04c4c">Ma</span> <span style="color:#4646a8">Sa</span></span>
<span class="a" style="left:83.8px;top:350.5px;font-size:9px;color:#2a2a2a;transform:scaleY(1.12);transform-origin:0 7.54px;">10</span>
<span class="a" style="left:63.1px;top:357.9px;font-size:9px;color:#2a2a2a;transform:scaleY(1.12);transform-origin:0 7.54px;">11</span>
<span class="a" style="left:64.8px;top:418.0px;font-size:9px;color:#2a2a2a;transform:scaleY(1.12);transform-origin:0 7.54px;">1</span>
<span class="a" style="left:85.4px;top:425.3px;font-size:9px;color:#2a2a2a;transform:scaleY(1.12);transform-origin:0 7.54px;">2</span>
<span class="a" style="left:168.0px;top:380.1px;font-size:9px;color:#2a2a2a;transform:scaleY(1.12);transform-origin:0 7.54px;">9</span>
<span class="a" style="left:145.6px;top:387.7px;font-size:9px;color:#2a2a2a;transform:scaleY(1.12);transform-origin:0 7.54px;">12</span>
<span class="a" style="left:187.8px;top:387.7px;font-size:9px;color:#2a2a2a;transform:scaleY(1.12);transform-origin:0 7.54px;">6</span>
<span class="a" style="left:168.0px;top:395.6px;font-size:9px;color:#2a2a2a;transform:scaleY(1.12);transform-origin:0 7.54px;">3</span>
<span class="a" style="left:270.7px;top:418.1px;font-size:9px;color:#2a2a2a;transform:scaleY(1.12);transform-origin:0 7.54px;">5</span>
<span class="a" style="left:250.2px;top:425.3px;font-size:9px;color:#2a2a2a;transform:scaleY(1.12);transform-origin:0 7.54px;">4</span>
<span class="a" style="left:250.4px;top:350.8px;font-size:9px;color:#2a2a2a;transform:scaleY(1.12);transform-origin:0 7.54px;">8</span>
<span class="a" style="left:270.2px;top:358.6px;font-size:9px;color:#2a2a2a;transform:scaleY(1.12);transform-origin:0 7.54px;">7</span>
<span class="a" style="left:355.5px;top:343.3px;font-size:11px;color:#444;transform:scaleY(1.1);transform-origin:0 9.21px;"><span style="color:#a43a3a">Su</span>-<span style="color:#3a3a9c">Sa</span>-<span style="color:#c850d8">Ve</span>-<span style="color:#d84444">Ma</span></span>
<span class="a" style="left:425.3px;top:343.5px;font-size:10.7px;color:#1a1a1a;transform:scaleY(1.1);transform-origin:0 8.96px;">Mon</span>
<span class="a" style="left:455.7px;top:343.5px;font-size:10.7px;color:#1a1a1a;transform:scaleY(1.1);transform-origin:0 8.96px;">22-12-2025</span>
<span class="a" style="left:355.5px;top:355.4px;font-size:11px;color:#444;transform:scaleY(1.1);transform-origin:0 9.21px;"><span style="color:#a43a3a">Su</span>-<span style="color:#3a3a9c">Sa</span>-<span style="color:#c850d8">Ve</span>-<span style="color:#585868">Ra</span></span>
<span class="a" style="left:425.3px;top:355.7px;font-size:10.7px;color:#1a1a1a;transform:scaleY(1.1);transform-origin:0 8.96px;">Mon</span>
<span class="a" style="left:455.7px;top:355.7px;font-size:10.7px;color:#1a1a1a;transform:scaleY(1.1);transform-origin:0 8.96px;">22-12-2025</span>
<span class="a" style="left:355.5px;top:367.6px;font-size:11px;color:#444;transform:scaleY(1.1);transform-origin:0 9.21px;"><span style="color:#a43a3a">Su</span>-<span style="color:#3a3a9c">Sa</span>-<span style="color:#c850d8">Ve</span>-<span style="color:#d89838">Ju</span></span>
<span class="a" style="left:425.3px;top:367.8px;font-size:10.7px;color:#1a1a1a;transform:scaleY(1.1);transform-origin:0 8.96px;">Mon</span>
<span class="a" style="left:455.7px;top:367.8px;font-size:10.7px;color:#1a1a1a;transform:scaleY(1.1);transform-origin:0 8.96px;">22-12-2025</span>
<span class="a" style="left:355.5px;top:379.7px;font-size:11px;color:#444;transform:scaleY(1.1);transform-origin:0 9.21px;"><span style="color:#a43a3a">Su</span>-<span style="color:#3a3a9c">Sa</span>-<span style="color:#c850d8">Ve</span>-<span style="color:#3a3a9c">Sa</span></span>
<span class="a" style="left:425.3px;top:380.0px;font-size:10.7px;color:#1a1a1a;transform:scaleY(1.1);transform-origin:0 8.96px;">Mon</span>
<span class="a" style="left:455.7px;top:380.0px;font-size:10.7px;color:#1a1a1a;transform:scaleY(1.1);transform-origin:0 8.96px;">22-12-2025</span>
<span class="a" style="left:355.5px;top:391.9px;font-size:11px;color:#444;transform:scaleY(1.1);transform-origin:0 9.21px;"><span style="color:#a43a3a">Su</span>-<span style="color:#3a3a9c">Sa</span>-<span style="color:#c850d8">Ve</span>-<span style="color:#389838">Me</span></span>
<span class="a" style="left:425.3px;top:392.1px;font-size:10.7px;color:#1a1a1a;transform:scaleY(1.1);transform-origin:0 8.96px;">Mon</span>
<span class="a" style="left:455.7px;top:392.1px;font-size:10.7px;color:#1a1a1a;transform:scaleY(1.1);transform-origin:0 8.96px;">22-12-2025</span>
<span class="a" style="left:355.5px;top:404.0px;font-size:11px;color:#444;transform:scaleY(1.1);transform-origin:0 9.21px;"><span style="color:#a43a3a">Su</span>-<span style="color:#3a3a9c">Sa</span>-<span style="color:#c850d8">Ve</span>-<span style="color:#7c4444">Ke</span></span>
<span class="a" style="left:425.3px;top:404.3px;font-size:10.7px;color:#1a1a1a;transform:scaleY(1.1);transform-origin:0 8.96px;">Mon</span>
<span class="a" style="left:455.7px;top:404.3px;font-size:10.7px;color:#1a1a1a;transform:scaleY(1.1);transform-origin:0 8.96px;">22-12-2025</span>
<span class="a" style="left:355.5px;top:416.2px;font-size:11px;color:#444;transform:scaleY(1.1);transform-origin:0 9.21px;"><span style="color:#a43a3a">Su</span>-<span style="color:#3a3a9c">Sa</span>-<span style="color:#a43a3a">Su</span>-<span style="color:#a43a3a">Su</span></span>
<span class="a" style="left:425.3px;top:416.4px;font-size:10.7px;color:#1a1a1a;transform:scaleY(1.1);transform-origin:0 8.96px;">Mon</span>
<span class="a" style="left:455.7px;top:416.4px;font-size:10.7px;color:#1a1a1a;transform:scaleY(1.1);transform-origin:0 8.96px;">22-12-2025</span>
<span class="a" style="left:355.5px;top:428.3px;font-size:11px;color:#444;transform:scaleY(1.1);transform-origin:0 9.21px;"><span style="color:#a43a3a">Su</span>-<span style="color:#3a3a9c">Sa</span>-<span style="color:#a43a3a">Su</span>-<span style="color:#2a2a2a">Mo</span></span>
<span class="a" style="left:425.3px;top:428.6px;font-size:10.7px;color:#1a1a1a;transform:scaleY(1.1);transform-origin:0 8.96px;">Mon</span>
<span class="a" style="left:455.7px;top:428.6px;font-size:10.7px;color:#1a1a1a;transform:scaleY(1.1);transform-origin:0 8.96px;">22-12-2025</span>
<span class="a" style="left:355.5px;top:440.5px;font-size:11px;color:#444;transform:scaleY(1.1);transform-origin:0 9.21px;"><span style="color:#a43a3a">Su</span>-<span style="color:#3a3a9c">Sa</span>-<span style="color:#a43a3a">Su</span>-<span style="color:#d84444">Ma</span></span>
<span class="a" style="left:425.3px;top:440.7px;font-size:10.7px;color:#1a1a1a;transform:scaleY(1.1);transform-origin:0 8.96px;">Mon</span>
<span class="a" style="left:455.7px;top:440.7px;font-size:10.7px;color:#1a1a1a;transform:scaleY(1.1);transform-origin:0 8.96px;">22-12-2025</span>
<span class="a" style="left:720.0px;top:184.0px;font-size:8.8px;color:#222;transform:scaleY(1.12);transform-origin:0 7.37px;">Griha</span>
<span class="a" style="left:814.0px;top:184.0px;font-size:8.8px;color:#222;transform:scaleY(1.12);transform-origin:0 7.37px;">Hudda</span>
<span class="a" style="left:908.0px;top:184.0px;font-size:8.8px;color:#222;transform:scaleY(1.12);transform-origin:0 7.37px;">Navamsha</span>
<span class="a" style="left:767.0px;top:196.1px;font-size:8.8px;color:#222;transform:scaleY(1.12);transform-origin:0 7.37px;">Uchcha</span>
<span class="a" style="left:861.0px;top:196.1px;font-size:8.8px;color:#222;transform:scaleY(1.12);transform-origin:0 7.37px;">Drekkana</span>
<span class="a" style="left:956.0px;top:196.1px;font-size:8.8px;color:#222;transform:scaleY(1.12);transform-origin:0 7.37px;">Total</span>
<span class="a" style="left:688.5px;top:210.0px;font-size:8.8px;color:#c84848;transform:scaleY(1.12);transform-origin:0 7.37px;">Su</span>
<span class="a" style="left:720.0px;top:210.0px;font-size:8.8px;color:#222;transform:scaleY(1.12);transform-origin:0 7.37px;">7.50</span>
<span class="a" style="left:767.0px;top:210.0px;font-size:8.8px;color:#222;transform:scaleY(1.12);transform-origin:0 7.37px;">6.30</span>
<span class="a" style="left:814.0px;top:210.0px;font-size:8.8px;color:#222;transform:scaleY(1.12);transform-origin:0 7.37px;">3.75</span>
<span class="a" style="left:861.0px;top:210.0px;font-size:8.8px;color:#222;transform:scaleY(1.12);transform-origin:0 7.37px;">5.00</span>
<span class="a" style="left:908.0px;top:210.0px;font-size:8.8px;color:#222;transform:scaleY(1.12);transform-origin:0 7.37px;">2.50</span>
<span class="a" style="left:956.0px;top:210.0px;font-size:8.8px;color:#222;transform:scaleY(1.12);transform-origin:0 7.37px;">6.26</span>
<span class="a" style="left:688.5px;top:222.0px;font-size:8.8px;color:#222;transform:scaleY(1.12);transform-origin:0 7.37px;">Mo</span>
<span class="a" style="left:720.0px;top:222.0px;font-size:8.8px;color:#222;transform:scaleY(1.12);transform-origin:0 7.37px;">22.50</span>
<span class="a" style="left:767.0px;top:222.0px;font-size:8.8px;color:#222;transform:scaleY(1.12);transform-origin:0 7.37px;">6.78</span>
<span class="a" style="left:814.0px;top:222.0px;font-size:8.8px;color:#222;transform:scaleY(1.12);transform-origin:0 7.37px;">11.25</span>
<span class="a" style="left:861.0px;top:222.0px;font-size:8.8px;color:#222;transform:scaleY(1.12);transform-origin:0 7.37px;">5.00</span>
<span class="a" style="left:908.0px;top:222.0px;font-size:8.8px;color:#222;transform:scaleY(1.12);transform-origin:0 7.37px;">3.75</span>
<span class="a" style="left:956.0px;top:222.0px;font-size:8.8px;color:#222;transform:scaleY(1.12);transform-origin:0 7.37px;">12.32</span>
<span class="a" style="left:688.5px;top:234.0px;font-size:8.8px;color:#e05050;transform:scaleY(1.12);transform-origin:0 7.37px;">Ma</span>
<span class="a" style="left:720.0px;top:234.0px;font-size:8.8px;color:#222;transform:scaleY(1.12);transform-origin:0 7.37px;">7.50</span>
<span class="a" style="left:767.0px;top:234.0px;font-size:8.8px;color:#222;transform:scaleY(1.12);transform-origin:0 7.37px;">14.80</span>
<span class="a" style="left:814.0px;top:234.0px;font-size:8.8px;color:#222;transform:scaleY(1.12);transform-origin:0 7.37px;">3.75</span>
<span class="a" style="left:861.0px;top:234.0px;font-size:8.8px;color:#222;transform:scaleY(1.12);transform-origin:0 7.37px;">5.00</span>
<span class="a" style="left:908.0px;top:234.0px;font-size:8.8px;color:#222;transform:scaleY(1.12);transform-origin:0 7.37px;">2.50</span>
<span class="a" style="left:956.0px;top:234.0px;font-size:8.8px;color:#222;transform:scaleY(1.12);transform-origin:0 7.37px;">8.39</span>
<span class="a" style="left:688.5px;top:246.0px;font-size:8.8px;color:#40a040;transform:scaleY(1.12);transform-origin:0 7.37px;">Me</span>
<span class="a" style="left:720.0px;top:246.0px;font-size:8.8px;color:#222;transform:scaleY(1.12);transform-origin:0 7.37px;">15.00</span>
<span class="a" style="left:767.0px;top:246.0px;font-size:8.8px;color:#222;transform:scaleY(1.12);transform-origin:0 7.37px;">12.75</span>
<span class="a" style="left:814.0px;top:246.0px;font-size:8.8px;color:#222;transform:scaleY(1.12);transform-origin:0 7.37px;">7.50</span>
<span class="a" style="left:861.0px;top:246.0px;font-size:8.8px;color:#222;transform:scaleY(1.12);transform-origin:0 7.37px;">5.00</span>
<span class="a" style="left:908.0px;top:246.0px;font-size:8.8px;color:#222;transform:scaleY(1.12);transform-origin:0 7.37px;">3.75</span>
<span class="a" style="left:956.0px;top:246.0px;font-size:8.8px;color:#222;transform:scaleY(1.12);transform-origin:0 7.37px;">11.00</span>
<span class="a" style="left:688.5px;top:258.0px;font-size:8.8px;color:#e0a040;transform:scaleY(1.12);transform-origin:0 7.37px;">Ju</span>
<span class="a" style="left:720.0px;top:258.0px;font-size:8.8px;color:#222;transform:scaleY(1.12);transform-origin:0 7.37px;">15.00</span>
<span class="a" style="left:767.0px;top:258.0px;font-size:8.8px;color:#222;transform:scaleY(1.12);transform-origin:0 7.37px;">19.26</span>
<span class="a" style="left:814.0px;top:258.0px;font-size:8.8px;color:#222;transform:scaleY(1.12);transform-origin:0 7.37px;">3.75</span>
<span class="a" style="left:861.0px;top:258.0px;font-size:8.8px;color:#222;transform:scaleY(1.12);transform-origin:0 7.37px;">2.50</span>
<span class="a" style="left:908.0px;top:258.0px;font-size:8.8px;color:#222;transform:scaleY(1.12);transform-origin:0 7.37px;">2.50</span>
<span class="a" style="left:956.0px;top:258.0px;font-size:8.8px;color:#222;transform:scaleY(1.12);transform-origin:0 7.37px;">10.75</span>
<span class="a" style="left:688.5px;top:270.0px;font-size:8.8px;color:#c848e8;transform:scaleY(1.12);transform-origin:0 7.37px;">Ve</span>
<span class="a" style="left:720.0px;top:270.0px;font-size:8.8px;color:#222;transform:scaleY(1.12);transform-origin:0 7.37px;">7.50</span>
<span class="a" style="left:767.0px;top:270.0px;font-size:8.8px;color:#222;transform:scaleY(1.12);transform-origin:0 7.37px;">7.34</span>
<span class="a" style="left:814.0px;top:270.0px;font-size:8.8px;color:#222;transform:scaleY(1.12);transform-origin:0 7.37px;">3.75</span>
<span class="a" style="left:861.0px;top:270.0px;font-size:8.8px;color:#222;transform:scaleY(1.12);transform-origin:0 7.37px;">5.00</span>
<span class="a" style="left:908.0px;top:270.0px;font-size:8.8px;color:#222;transform:scaleY(1.12);transform-origin:0 7.37px;">1.25</span>
<span class="a" style="left:956.0px;top:270.0px;font-size:8.8px;color:#222;transform:scaleY(1.12);transform-origin:0 7.37px;">6.21</span>
<span class="a" style="left:688.5px;top:282.0px;font-size:8.8px;color:#4848b0;transform:scaleY(1.12);transform-origin:0 7.37px;">Sa</span>
<span class="a" style="left:720.0px;top:282.0px;font-size:8.8px;color:#222;transform:scaleY(1.12);transform-origin:0 7.37px;">7.50</span>
<span class="a" style="left:767.0px;top:282.0px;font-size:8.8px;color:#222;transform:scaleY(1.12);transform-origin:0 7.37px;">5.39</span>
<span class="a" style="left:814.0px;top:282.0px;font-size:8.8px;color:#222;transform:scaleY(1.12);transform-origin:0 7.37px;">3.75</span>
<span class="a" style="left:861.0px;top:282.0px;font-size:8.8px;color:#222;transform:scaleY(1.12);transform-origin:0 7.37px;">10.00</span>
<span class="a" style="left:908.0px;top:282.0px;font-size:8.8px;color:#222;transform:scaleY(1.12);transform-origin:0 7.37px;">3.75</span>
<span class="a" style="left:956.0px;top:282.0px;font-size:8.8px;color:#222;transform:scaleY(1.12);transform-origin:0 7.37px;">7.60</span>
<span class="a" style="left:688.6px;top:334.3px;font-size:8.8px;color:#222;transform:scaleY(1.12);transform-origin:0 7.37px;">Year lord</span>
<span class="a" style="left:768.6px;top:334.3px;font-size:8.8px;color:#222;transform:scaleY(1.12);transform-origin:0 7.37px;">Ma</span>
<span class="a" style="left:688.6px;top:346.2px;font-size:8.8px;color:#222;transform:scaleY(1.12);transform-origin:0 7.37px;">Muntha:</span>
<span class="a" style="left:768.6px;top:346.2px;font-size:8.8px;color:#222;transform:scaleY(1.12);transform-origin:0 7.37px;">Ari 07:12</span>
<span class="a" style="left:688.6px;top:358.1px;font-size:8.8px;color:#222;transform:scaleY(1.12);transform-origin:0 7.37px;">Panchadhikaris:</span>
<span class="a" style="left:688.6px;top:370.0px;font-size:8.8px;color:#222;transform:scaleY(1.12);transform-origin:0 7.37px;">Muntha Pati</span>
<span class="a" style="left:768.6px;top:370.0px;font-size:8.8px;color:#222;transform:scaleY(1.12);transform-origin:0 7.37px;">Ma (8.39)</span>
<span class="a" style="left:688.6px;top:381.9px;font-size:8.8px;color:#222;transform:scaleY(1.12);transform-origin:0 7.37px;">Janma Lagna Pati</span>
<span class="a" style="left:768.6px;top:381.9px;font-size:8.8px;color:#222;transform:scaleY(1.12);transform-origin:0 7.37px;">Ma (8.39)</span>
<span class="a" style="left:688.6px;top:393.8px;font-size:8.8px;color:#222;transform:scaleY(1.12);transform-origin:0 7.37px;">Varsha Lagna Pati</span>
<span class="a" style="left:768.6px;top:393.8px;font-size:8.8px;color:#222;transform:scaleY(1.12);transform-origin:0 7.37px;">Me (11.00)</span>
<span class="a" style="left:688.6px;top:405.7px;font-size:8.8px;color:#222;transform:scaleY(1.12);transform-origin:0 7.37px;">Trirashi Pati</span>
<span class="a" style="left:768.6px;top:405.7px;font-size:8.8px;color:#222;transform:scaleY(1.12);transform-origin:0 7.37px;">Me (11.00)</span>
<span class="a" style="left:688.6px;top:417.6px;font-size:8.8px;color:#222;transform:scaleY(1.12);transform-origin:0 7.37px;">Dinaratri Pati</span>
<span class="a" style="left:768.6px;top:417.6px;font-size:8.8px;color:#222;transform:scaleY(1.12);transform-origin:0 7.37px;">Sa (7.60)</span>
<span class="a" style="left:837.2px;top:37.1px;font-size:7.5px;color:#222;">Shad Bala</span>
<span class="a" style="right:289.8px;top:132.7px;font-size:7.5px;color:#222">0%</span>
<span class="a" style="right:289.8px;top:124.1px;font-size:7.5px;color:#222">20%</span>
<span class="a" style="right:289.8px;top:115.6px;font-size:7.5px;color:#222">40%</span>
<span class="a" style="right:289.8px;top:107.0px;font-size:7.5px;color:#222">60%</span>
<span class="a" style="right:289.8px;top:98.4px;font-size:7.5px;color:#222">80%</span>
<span class="a" style="right:289.8px;top:89.8px;font-size:7.5px;color:#222">100%</span>
<span class="a" style="right:289.8px;top:81.3px;font-size:7.5px;color:#222">120%</span>
<span class="a" style="right:289.8px;top:72.7px;font-size:7.5px;color:#222">140%</span>
<span class="a" style="right:289.8px;top:64.1px;font-size:7.5px;color:#222">160%</span>
<span class="a" style="right:289.8px;top:55.6px;font-size:7.5px;color:#222">180%</span>
<span class="a" style="right:289.8px;top:47.0px;font-size:7.5px;color:#222">200%</span>
<span class="a" style="left:746.3px;width:30px;text-align:center;top:138.9px;font-size:7.5px;color:#222">Su</span>
<span class="a" style="left:783.8px;width:30px;text-align:center;top:138.9px;font-size:7.5px;color:#222">Mo</span>
<span class="a" style="left:821.2px;width:30px;text-align:center;top:138.9px;font-size:7.5px;color:#222">Ma</span>
<span class="a" style="left:858.6px;width:30px;text-align:center;top:138.9px;font-size:7.5px;color:#222">Me</span>
<span class="a" style="left:896.1px;width:30px;text-align:center;top:138.9px;font-size:7.5px;color:#222">Ju</span>
<span class="a" style="left:933.5px;width:30px;text-align:center;top:138.9px;font-size:7.5px;color:#222">Ve</span>
<span class="a" style="left:971.0px;width:30px;text-align:center;top:138.9px;font-size:7.5px;color:#222">Sa</span>
<span class="a" style="left:777.4px;top:147.8px;font-size:7.5px;color:#222;">Planets (Progression (24) 22 Dec 2025  16:55:53)</span>
<span class="a" style="left:681.5px;top:88.8px;width:30px;text-align:center;font-size:7.2px;color:#222;transform:rotate(-90deg)">Bala%</span>
</body></html>
